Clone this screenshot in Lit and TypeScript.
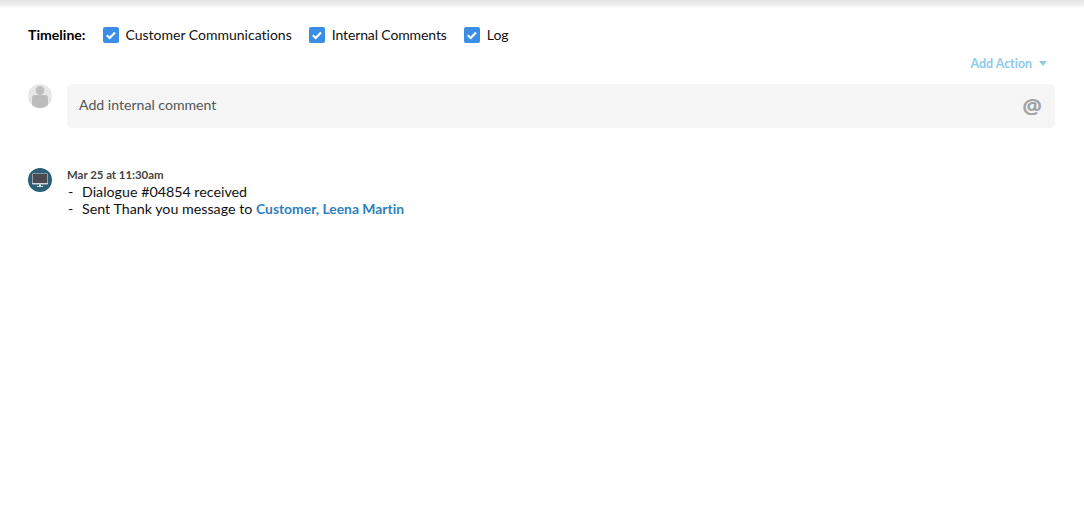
import { LitElement, html, css } from "lit";
import { customElement } from "lit/decorators.js";

const check = html`<svg class="tick" viewBox="0 0 16 16" width="16" height="16"><path d="M3.8 8.2 L6.7 11 L12 5.4" fill="none" stroke="#fff" stroke-width="2.2"/></svg>`;

@customElement("app-root")
export class AppRoot extends LitElement {
  static styles = css`
    :host { display: block; width: 1084px; height: 518px; background: #fff; font-family: Lato, "Open Sans", sans-serif; font-variant-ligatures: none; color: #111; overflow: hidden; }
    .shade { height: 9px; background: linear-gradient(#e4e4e4, #ececec 40%, #fafafa 85%, #fff); }
    .filters { display: flex; align-items: center; height: 22px; margin: 14px 0 0 28px; font-size: 14px; }
    .title { font-weight: 700; font-size: 14.1px; color: #000; margin-right: 17px; }
    .opt { display: flex; align-items: center; gap: 7px; margin-right: 17px; }
    .tight { letter-spacing: -0.12px; }
    .box { width: 16px; height: 16px; border-radius: 2px; background: #3a8ee6; display: block; margin-top: 2px; }
    .tick { display: block; }
    .actions { display: flex; justify-content: flex-end; align-items: center; gap: 6px; height: 18px; margin: 9px 37px 0 0; font-size: 12.4px; font-weight: 700; color: #8ccbec; }
    .caret { width: 0; height: 0; border-left: 4px solid transparent; border-right: 4px solid transparent; border-top: 5px solid #8ccbec; margin-left: 1px; }
    .composer { display: flex; gap: 15px; margin: 12px 29px 0 28px; }
    .avatar { width: 24px; height: 24px; flex: none; display: block; }
    .input { flex: 1; height: 44px; box-sizing: border-box; display: flex; align-items: center; justify-content: space-between; padding: 0 13px 3px 12px; border-radius: 5px; background-color: #f6f6f6; background-image: repeating-conic-gradient(#f2f2f2 0 25%, #f9f9f9 0 50%); background-size: 2px 2px; font-size: 14.1px; color: #555; }
    .at { font-size: 22px; font-weight: 700; color: #a3a3a3; font-family: "Open Sans", sans-serif; line-height: 1; }
    .entry { display: flex; gap: 15px; margin: 40px 29px 0 28px; }
    .meta { font-size: 11.4px; font-weight: 700; color: #444; line-height: 14px; margin-bottom: 1px; }
    .line { font-size: 14.25px; line-height: 17px; color: #111; display: flex; }
    .dash { width: 15px; text-align: left; padding-left: 1px; box-sizing: border-box; }
    .link { color: #2f80bd; font-weight: 700; font-size: 13.9px; }
  `;

  render() {
    return html`
      <div class="shade"></div>
      <div class="filters">
        <span class="title">Timeline:</span>
        <label class="opt"><span class="box">${check}</span>Customer Communications</label>
        <label class="opt tight"><span class="box">${check}</span>Internal Comments</label>
        <label class="opt"><span class="box">${check}</span>Log</label>
      </div>
      <div class="actions">Add Action <span class="caret"></span></div>
      <div class="composer">
        <svg class="avatar" viewBox="0 0 24 24">
          <circle cx="12" cy="12" r="12" fill="#e6e6e6"/>
          <circle cx="12" cy="6.5" r="4.4" fill="#bdbdbd"/>
          <path d="M4 21 V14 Q4 11 7 11 H17 Q20 11 20 14 V21 A12 12 0 0 1 4 21 Z" fill="#bdbdbd"/>
        </svg>
        <div class="input"><span>Add internal comment</span><span class="at">@</span></div>
      </div>
      <div class="entry">
        <svg class="avatar" viewBox="0 0 24 24">
          <circle cx="12" cy="12" r="12" fill="#2b5f78"/>
          <rect x="4" y="5.5" width="16" height="11" rx="1" fill="#d8d8dc"/>
          <rect x="4.6" y="6" width="14.8" height="9" fill="#4a4a52"/>
          <rect x="11" y="16.5" width="2" height="1.6" fill="#e8e8e8"/>
          <rect x="9" y="18" width="6" height="0.9" fill="#e8e8e8"/>
        </svg>
        <div>
          <div class="meta">Mar 25 at 11:30am</div>
          <div class="line"><span class="dash">-</span><span>Dialogue #04854 received</span></div>
          <div class="line"><span class="dash">-</span><span>Sent Thank you message to <span class="link">Customer, Leena Martin</span></span></div>
        </div>
      </div>
    `;
  }
}
